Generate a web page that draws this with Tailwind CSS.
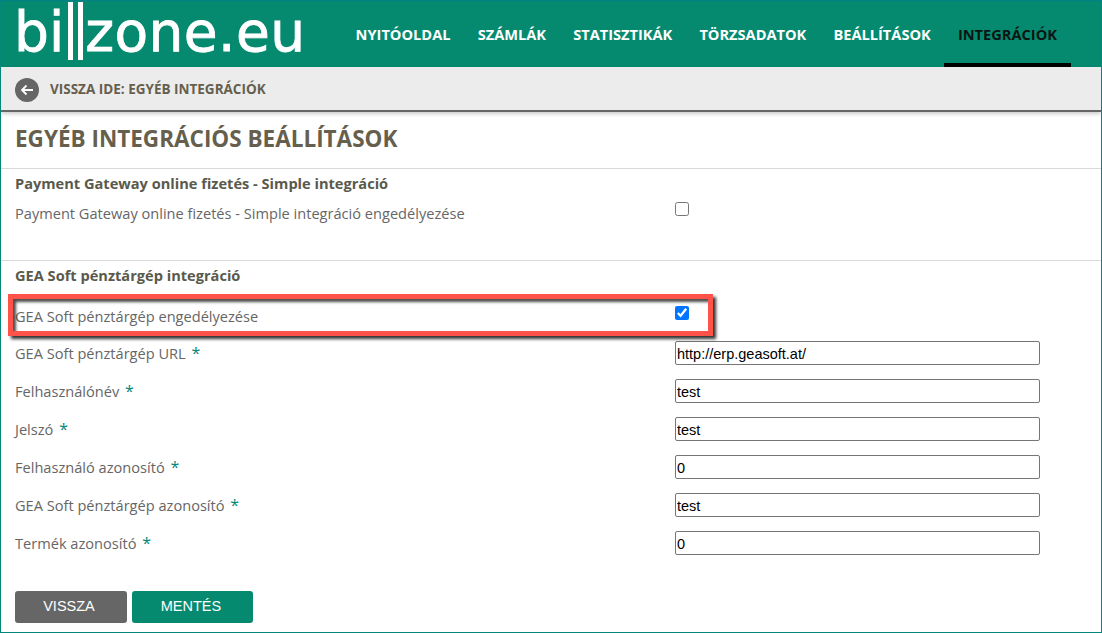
<!DOCTYPE html>
<html lang="hu">
  <head>
    <meta charset="UTF-8" />
    <title>billzone.eu</title>
    <script src="https://cdn.jsdelivr.net/npm/@tailwindcss/browser@4"></script>
  </head>
  <body class="bg-white font-['Open_Sans',sans-serif]">
    <div class="relative w-[1102px] h-[633px] overflow-hidden border border-[#04867a] border-t-[#04808a]">
      <!-- Fejléc -->
      <header class="flex h-[66px] bg-[#058a70]">
        <div class="flex items-start w-[341px] pl-[13px] text-white font-['DejaVu_Sans',sans-serif] text-[55px] leading-[64px] [-webkit-text-stroke:0.8px_white]">
          <span class="mt-[-1px]">bi</span>
          <span class="mt-[1px] ml-[4px] w-[5px] h-[58px] bg-white"></span>
          <span class="mt-[1px] ml-[5px] w-[5px] h-[58px] bg-white"></span>
          <span class="mt-[-1px] ml-[2px] tracking-[0.4px]">zone.eu</span>
        </div>
        <nav class="flex text-[14.6px] font-bold text-white">
          <a class="px-[13.6px] pt-[23px] leading-[20px]">NYITÓOLDAL</a>
          <a class="px-[13.6px] pt-[23px] leading-[20px]">SZÁMLÁK</a>
          <a class="px-[13.6px] pt-[23px] leading-[20px]">STATISZTIKÁK</a>
          <a class="px-[13.6px] pt-[23px] leading-[20px]">TÖRZSADATOK</a>
          <a class="px-[13.6px] pt-[23px] leading-[20px]">BEÁLLÍTÁSOK</a>
          <a class="px-[13.6px] pt-[23px] leading-[20px] text-[#0a1512] border-b-4 border-black">INTEGRÁCIÓK</a>
        </nav>
      </header>

      <!-- Vissza sáv -->
      <div class="flex items-center h-[45px] pl-[14px] pt-[2px] bg-[#ececec] border-b-2 border-[#666] shadow-[0_2px_4px_rgba(0,0,0,0.2)]">
        <span class="flex items-center justify-center w-[24px] h-[24px] rounded-full bg-[#666]">
          <svg width="14" height="14" viewBox="0 0 14 14" fill="none" stroke="white" stroke-width="1.8">
            <path d="M13 7H2M6.5 2.5 2 7l4.5 4.5" />
          </svg>
        </span>
        <span class="ml-[11px] text-[13.5px] font-bold text-[#665f4d]">VISSZA IDE: EGYÉB INTEGRÁCIÓK</span>
      </div>

      <h1 class="h-[56px] pl-[14px] pt-[11px] text-[22.5px] leading-[32px] font-bold text-[#665f4d]">EGYÉB INTEGRÁCIÓS BEÁLLÍTÁSOK</h1>

      <!-- Simple integráció -->
      <section class="h-[92px] border-t border-[#d9d9d9] pl-[14px] text-[14.6px] text-[#666]">
        <h2 class="pt-[4px] leading-[20px] font-bold text-[#5a5a4c]">Payment Gateway online fizetés - Simple integráció</h2>
        <div class="flex mt-[10px] h-[20px] leading-[20px]">
          <label class="w-[660px]">Payment Gateway online fizetés - Simple integráció engedélyezése</label>
          <input type="checkbox" class="w-[14px] h-[14px] -mt-[1px]" />
        </div>
      </section>

      <!-- GEA Soft -->
      <section class="border-t border-[#d9d9d9] pl-[14px] text-[14.6px] text-[#666]">
        <h2 class="pt-[4px] leading-[20px] font-bold text-[#5a5a4c]">GEA Soft pénztárgép integráció</h2>
        <div class="flex mt-[21px] h-[20px] leading-[20px]">
          <label class="w-[660px]">GEA Soft pénztárgép engedélyezése</label>
          <input type="checkbox" checked class="w-[14px] h-[14px]" />
        </div>
        <div class="flex flex-col gap-[12px] mt-[14px]">
          <div class="flex items-center h-[26px]">
            <label class="w-[660px]">GEA Soft pénztárgép URL <span class="ml-[2px] text-[16px] text-[#04867a]">*</span></label>
            <input type="text" value="http://erp.geasoft.at/" class="w-[365px] h-[24px] px-[1px] pt-[1px] border border-[#767676] rounded-[2px] text-[14.5px] text-black font-['Liberation_Sans',sans-serif]" />
          </div>
          <div class="flex items-center h-[26px]">
            <label class="w-[660px]">Felhasználónév <span class="ml-[2px] text-[16px] text-[#04867a]">*</span></label>
            <input type="text" value="test" class="w-[365px] h-[24px] px-[1px] pt-[1px] border border-[#767676] rounded-[2px] text-[14.5px] text-black font-['Liberation_Sans',sans-serif]" />
          </div>
          <div class="flex items-center h-[26px]">
            <label class="w-[660px]">Jelszó <span class="ml-[2px] text-[16px] text-[#04867a]">*</span></label>
            <input type="text" value="test" class="w-[365px] h-[24px] px-[1px] pt-[1px] border border-[#767676] rounded-[2px] text-[14.5px] text-black font-['Liberation_Sans',sans-serif]" />
          </div>
          <div class="flex items-center h-[26px]">
            <label class="w-[660px]">Felhasználó azonosító <span class="ml-[2px] text-[16px] text-[#04867a]">*</span></label>
            <input type="text" value="0" class="w-[365px] h-[24px] px-[1px] pt-[1px] border border-[#767676] rounded-[2px] text-[14.5px] text-black font-['Liberation_Sans',sans-serif]" />
          </div>
          <div class="flex items-center h-[26px]">
            <label class="w-[660px]">GEA Soft pénztárgép azonosító <span class="ml-[2px] text-[16px] text-[#04867a]">*</span></label>
            <input type="text" value="test" class="w-[365px] h-[24px] px-[1px] pt-[1px] border border-[#767676] rounded-[2px] text-[14.5px] text-black font-['Liberation_Sans',sans-serif]" />
          </div>
          <div class="flex items-center h-[26px]">
            <label class="w-[660px]">Termék azonosító <span class="ml-[2px] text-[16px] text-[#04867a]">*</span></label>
            <input type="text" value="0" class="w-[365px] h-[24px] px-[1px] pt-[1px] border border-[#767676] rounded-[2px] text-[14.5px] text-black font-['Liberation_Sans',sans-serif]" />
          </div>
        </div>
        <div class="flex gap-[5px] mt-[35px] font-['Liberation_Sans',sans-serif] text-[14.5px] text-white">
          <button class="w-[112px] h-[32px] pr-[4px] rounded-[3px] bg-[#666]">VISSZA</button>
          <button class="w-[121px] h-[32px] pr-[3px] rounded-[3px] bg-[#058a70]">MENTÉS</button>
        </div>
      </section>

      <!-- Kiemelés a képernyőképen -->
      <div class="absolute left-[7px] top-[293px] w-[705px] h-[42px] border-[5px] border-[#ff5349] shadow-[3px_3px_3px_rgba(0,0,0,0.8),inset_3px_3px_3px_rgba(0,0,0,0.7)]"></div>
    </div>
  </body>
</html>
